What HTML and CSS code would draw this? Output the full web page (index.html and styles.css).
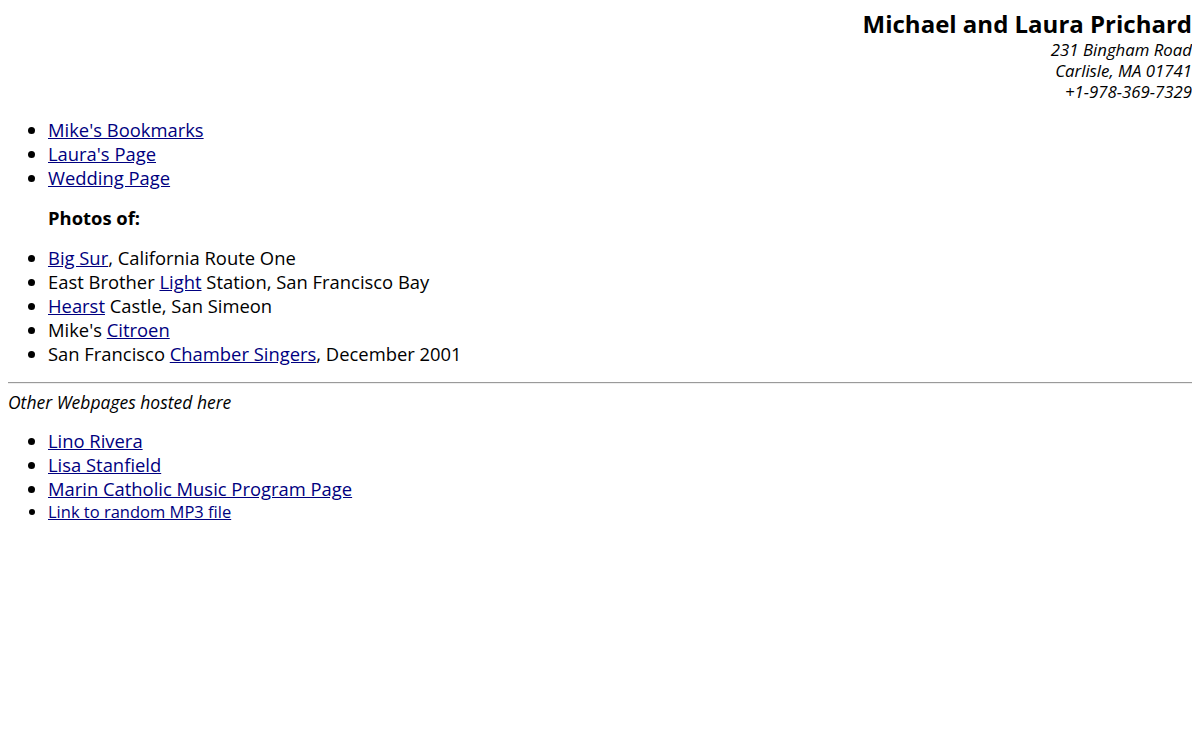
FILE: index.html
```html
<!DOCTYPE html>
<html lang="en">
<head>
  <meta charset="UTF-8">
  <title>Michael and Laura Prichard</title>
  <link rel="stylesheet" href="styles.css">
</head>
<body>
  <div class="cabecalho">
    <h2>Michael and Laura Prichard</h2>
    <address>
      231 Bingham Road<br>
      Carlisle, MA 01741<br>
      +1-978-369-7329
    </address>
  </div>
  <ul class="grande">
    <li><a href="#">Mike's Bookmarks</a></li>
    <li><a href="#">Laura's Page</a></li>
    <li><a href="#">Wedding Page</a></li>
    <p class="fotos">Photos of:</p>
    <li><a href="#">Big Sur</a>, California Route One</li>
    <li>East Brother <a href="#">Light</a> Station, San Francisco Bay</li>
    <li><a href="#">Hearst</a> Castle, San Simeon</li>
    <li>Mike's <a href="#">Citroen</a></li>
    <li>San Francisco <a href="#">Chamber Singers</a>, December 2001</li>
  </ul>
  <hr>
  <em class="outras">Other Webpages hosted here</em>
  <ul class="grande">
    <li><a href="#">Lino Rivera</a></li>
    <li><a href="#">Lisa Stanfield</a></li>
    <li><a href="#">Marin Catholic Music Program Page</a></li>
    <li class="pequeno"><a href="#">Link to random MP3 file</a></li>
  </ul>
</body>
</html>
```

FILE: styles.css
```css
body {
  font-family: "Open Sans", "Noto Sans", sans-serif;
  font-size: 16px;
  line-height: 21px;
  color: #000;
  background: #fff;
  margin: 8px;
}
a {
  color: #000080;
}
.cabecalho {
  text-align: right;
}
.cabecalho h2 {
  margin: 0;
  font-size: 24px;
  line-height: 31px;
  font-weight: bold;
}
address {
  font-style: italic;
  font-size: 16.8px;
}
ul.grande {
  margin: 16px 0;
  padding-left: 40px;
  font-size: 18.4px;
  line-height: 24px;
}
.fotos {
  font-weight: bold;
  margin: 16px 0;
}
.pequeno {
  font-size: 16.5px;
  line-height: 22px;
}
hr {
  margin: 8px 0;
  border: none;
  border-top: 1px solid #9a9a9a;
  border-bottom: 1px solid #eee;
}
.outras {
  display: block;
  font-size: 17.5px;
}
```
